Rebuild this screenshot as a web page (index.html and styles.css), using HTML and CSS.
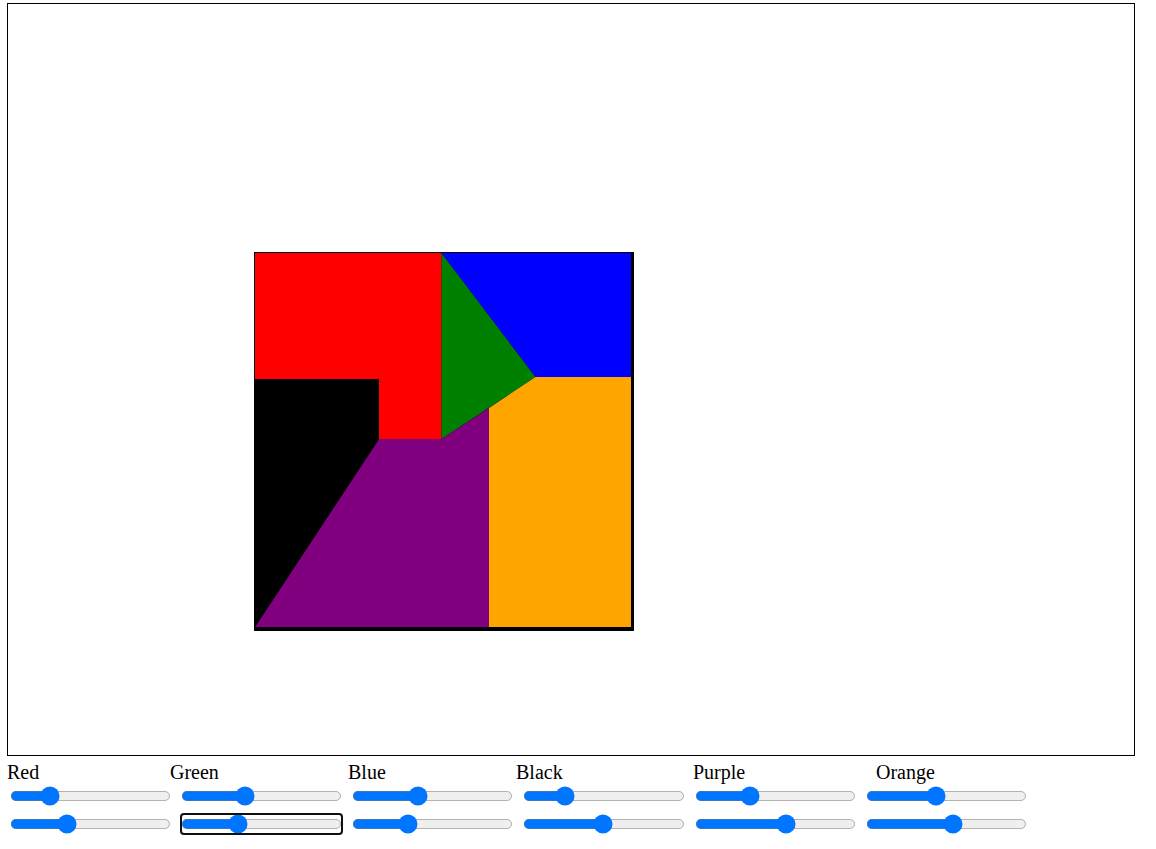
FILE: index.html
```html
<!DOCTYPE html>
<html>
<head>
<meta charset="utf-8">
<link rel="stylesheet" href="styles.css">
</head>
<body>
<div class="board">
  <svg class="canvas" width="1126" height="751" viewBox="0 0 1126 751">
    <rect x="246" y="248" width="380" height="379" fill="#000"/>
    <polygon points="247,249 433.5,249 433.5,435 371,435 371,375 247,375" fill="#ff0000"/>
    <polygon points="433.5,249 527.5,373 433.5,435" fill="#008000"/>
    <polygon points="433.5,249 623,249 623,373 527.5,373" fill="#0000ff"/>
    <polygon points="481,404 527.5,373 623,373 623,623 481,623" fill="#ffa500"/>
    <polygon points="371,435 433.5,435 481,404 481,623 247,623" fill="#800080"/>
    <polygon points="247,375 371,375 371,435 247,623" fill="#000000"/>
  </svg>
</div>
<div class="controls">
  <div class="labels">
    <span class="label w-red">Red</span>
    <span class="label w-green">Green</span>
    <span class="label w-blue">Blue</span>
    <span class="label w-black">Black</span>
    <span class="label w-purple">Purple</span>
    <span class="label">Orange</span>
  </div>
  <div class="sliders">
    <div class="row">
      <input type="range" min="0" max="1000" value="216">
      <input type="range" min="0" max="1000" value="384">
      <input type="range" min="0" max="1000" value="396">
      <input type="range" min="0" max="1000" value="225">
      <input type="range" min="0" max="1000" value="322">
      <input type="range" min="0" max="1000" value="427">
    </div>
    <div class="row">
      <input type="range" min="0" max="1000" value="336">
      <input type="range" class="focused" min="0" max="1000" value="335">
      <input type="range" min="0" max="1000" value="326">
      <input type="range" min="0" max="1000" value="494">
      <input type="range" min="0" max="1000" value="577">
      <input type="range" min="0" max="1000" value="547">
    </div>
  </div>
</div>
</body>
</html>
```

FILE: styles.css
```css
html, body {
  margin: 0;
  padding: 0;
  background: #ffffff;
}

body {
  font-family: "Liberation Serif", "Times New Roman", serif;
  color: #000;
}

.board {
  margin: 3px 0 0 7px;
  width: 1126px;
  height: 751px;
  border: 1px solid #000;
}

.canvas {
  display: block;
}

.controls {
  padding-left: 7px;
}

.labels {
  display: flex;
  margin-top: 5px;
  font-size: 20px;
  line-height: 23px;
}

.w-red { width: 163px; }
.w-green { width: 178px; }
.w-blue { width: 168px; }
.w-black { width: 177px; }
.w-purple { width: 183px; }

.sliders {
  zoom: 1.25;
  display: flex;
  flex-direction: column;
  row-gap: 2.4px;
  margin-top: -0.8px;
}

.row {
  display: flex;
  column-gap: 4px;
}

.row input {
  width: 129px;
  margin: 2px;
}

.focused {
  outline: 1.6px solid #101010;
  outline-offset: -0.8px;
  border-radius: 2.4px;
}
```
